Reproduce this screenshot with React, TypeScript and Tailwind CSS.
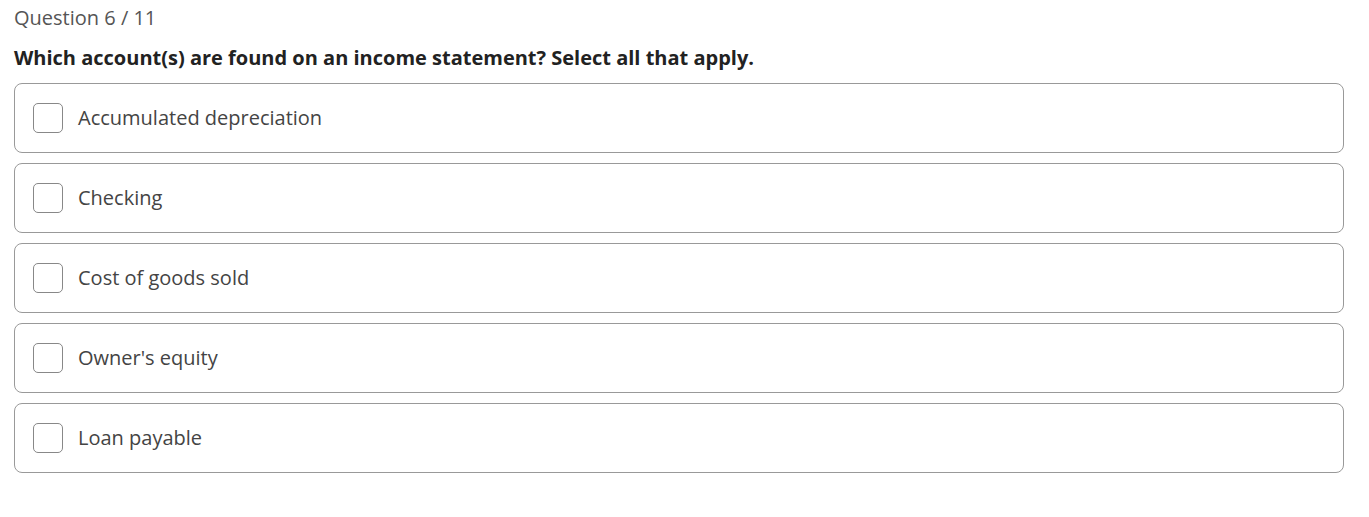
const options = [
  'Accumulated depreciation',
  'Checking',
  'Cost of goods sold',
  "Owner's equity",
  'Loan payable',
]

export default function App() {
  return (
    <div className="min-h-[517px] bg-white pl-[14px] pr-[25px] pt-[4px] font-['Open_Sans',sans-serif]">
      <div className="text-[20px] leading-[28px] text-[#555]">Question 6 / 11</div>
      <h2 className="mt-[12px] text-[20px] font-bold leading-[28px] text-[#222]">
        Which account(s) are found on an income statement? Select all that apply.
      </h2>
      <div className="mt-[11px] flex flex-col gap-[10px]">
        {options.map((opt) => (
          <label
            key={opt}
            className="flex h-[70px] cursor-pointer items-center rounded-[8px] border border-[#999] pl-[18px]"
          >
            <span className="h-[30px] w-[30px] shrink-0 rounded-[5px] border border-[#888] bg-white" />
            <span className="ml-[15px] text-[20px] text-[#444]">{opt}</span>
          </label>
        ))}
      </div>
    </div>
  )
}
